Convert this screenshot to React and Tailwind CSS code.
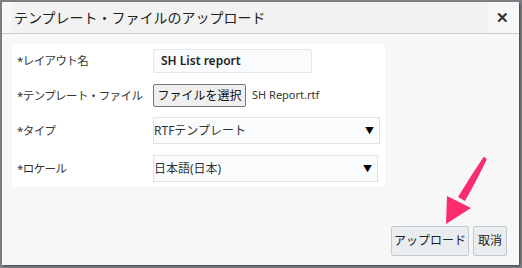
const font = { fontFamily: '"Noto Sans", "Noto Sans CJK JP", sans-serif' };

const Row = ({ label, children, className = "" }) => (
  <div className={`flex items-center ${className}`}>
    <div className="w-[136px] whitespace-nowrap text-[11.5px] tracking-[-0.6px] text-[#333]">*{label}</div>
    <div className="flex items-center">{children}</div>
  </div>
);

const Select = ({ value, width }) => (
  <div
    className={`flex items-center justify-between h-[27px] border border-[#dfe3e6] bg-[#f9fbfd] text-[12px] text-[#333] ${width}`}
  >
    <span>{value}</span>
    <span className="text-[9px] text-black mr-[5px] leading-none">▼</span>
  </div>
);

export default function App() {
  return (
    <div className="relative w-[522px] h-[268px] bg-[#7e8184] p-[2px] pb-[3px]" style={font}>
      <div className="w-[517px] h-[263px] bg-[#f7f7f7] flex flex-col shadow-[1px_1px_2px_rgba(0,0,0,0.5)]">
        <div className="h-[32px] border-b border-[#c6cbd0] flex items-center justify-between pl-[10px] pr-[10px] bg-[#f7f7f7]">
          <div className="h-full flex items-center flex-1 bg-[#f2f2f2] pl-[2px] text-[14px] text-[#222]">
            テンプレート・ファイルのアップロード
          </div>
          <div className="text-[15px] font-bold text-[#333] pl-[8px]">✕</div>
        </div>
        <div className="flex-1 flex flex-col pl-[10px] pr-[11px] pt-[10px]">
          <div className="w-[373px] bg-white pl-[5px] pt-[5px] pb-[5px] flex flex-col">
            <Row label="レイアウト名" className="mb-[11px]">
              <div className="w-[159px] h-[24px] border border-[#e3e7ea] bg-[#f9fbfd] rounded-[2px] px-[7px] flex items-center text-[12px] font-semibold text-[#222]">
                SH List report
              </div>
            </Row>
            <Row label="テンプレート・ファイル" className="mb-[10px]">
              <div className="h-[23px] w-[93px] border border-[#767676] bg-[#efefef] rounded-[2px] flex items-center justify-center text-[12px] text-[#111]">
                ファイルを選択
              </div>
              <span className="ml-[6px] text-[11px] text-[#333]">SH Report.rtf</span>
            </Row>
            <Row label="タイプ" className="mb-[11px]">
              <Select value="RTFテンプレート" width="w-[227px]" />
            </Row>
            <Row label="ロケール">
              <Select value="日本語(日本)" width="w-[225px]" />
            </Row>
          </div>
          <div className="flex-1 flex items-end justify-end gap-[4px] pb-[9px] pr-[1px]">
            <div className="h-[30px] w-[78px] border border-[#c4cace] bg-[#e9edf0] rounded-[2px] flex items-center justify-center text-[12px] text-[#222]">
              アップロード
            </div>
            <div className="h-[30px] w-[34px] border border-[#c4cace] bg-[#e9edf0] rounded-[2px] flex items-center justify-center text-[12px] text-[#222]">
              取消
            </div>
          </div>
        </div>
      </div>
      <svg className="absolute left-[440px] top-[150px]" width="55" height="80" viewBox="0 0 55 80">
        <path d="M43.5 7 Q47 8 46.5 10 Q37 30 25 51 L18 47 Q30 27 43.5 7 Z" fill="#fa2c6d" />
        <path d="M6 74 L7 46 L31 58 Z" fill="#fa2c6d" />
      </svg>
    </div>
  );
}
